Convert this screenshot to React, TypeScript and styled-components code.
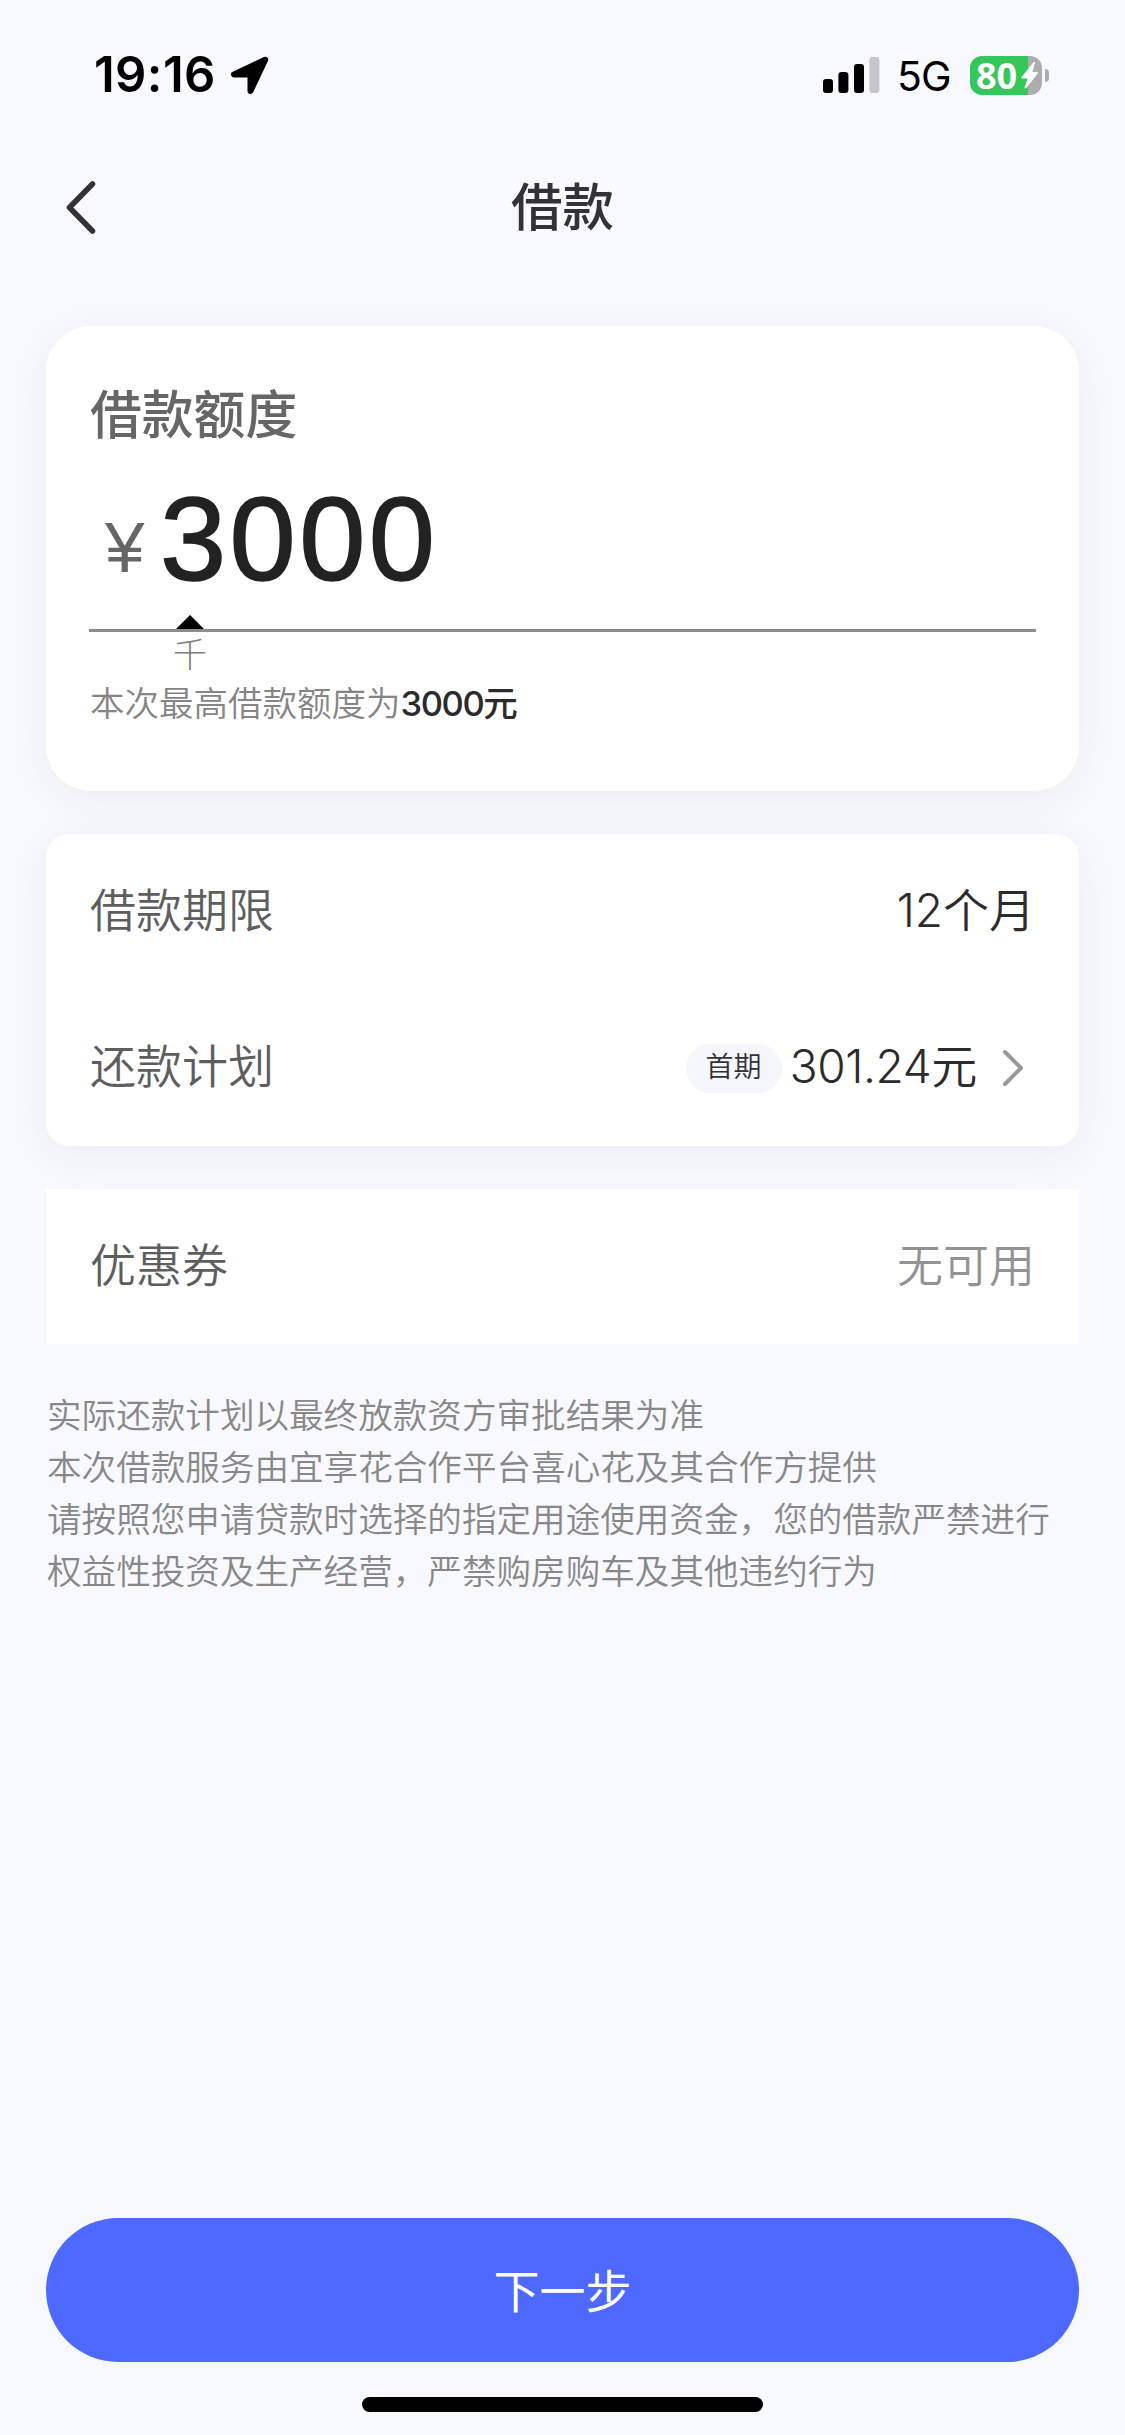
import React from 'react';
import styled, { createGlobalStyle } from 'styled-components';

const GlobalStyle = createGlobalStyle`
  * { box-sizing: border-box; }
  html, body { margin: 0; background: #f8f9fe; }
  body {
    font-family: Inter, "Noto Sans CJK SC", sans-serif;
    color: #333;
    -webkit-font-smoothing: antialiased;
  }
`;

const Screen = styled.div`
  width: 1125px;
  height: 2435px;
  display: flex;
  flex-direction: column;
  overflow: hidden;
  background: #f8f9fe;
`;

const StatusBar = styled.div`
  height: 141px;
  padding: 9px 76px 0 94px;
  display: flex;
  align-items: center;
  justify-content: space-between;
  color: #000;
`;

const StatusGroup = styled.div`
  display: flex;
  align-items: center;
`;

const Time = styled.span`
  font-size: 49px;
  font-weight: 600;
  line-height: 60px;
  letter-spacing: 0.4px;
  margin-right: 14px;
`;

const Network = styled.span`
  width: 57px;
  margin: 2px 16px 0 17px;
  font-size: 41px;
  line-height: 50px;
  letter-spacing: -1px;
`;

const Battery = styled.div`
  display: flex;
  align-items: center;
  gap: 3px;
`;

const BatteryBody = styled.div`
  width: 72px;
  height: 39px;
  padding-left: 6px;
  display: flex;
  align-items: center;
  border-radius: 12px;
  background: linear-gradient(to right, #34c759 58px, #adadb1 58px);
`;

const BatteryLevel = styled.span`
  width: 45px;
  font-family: "Open Sans", sans-serif;
  font-size: 36px;
  font-weight: 700;
  line-height: 39px;
  color: #fff;
`;

const BatteryTip = styled.div`
  width: 4px;
  height: 13px;
  border-radius: 0 5px 5px 0;
  background: #adadb1;
`;

const NavBar = styled.header`
  height: 132px;
  padding: 0 64px;
  display: grid;
  grid-template-columns: 34px 1fr 34px;
  align-items: center;
`;

const NavTitle = styled.h1`
  margin: 0;
  text-align: center;
  font-size: 51.5px;
  font-weight: 500;
  line-height: 76px;
`;

const Content = styled.main`
  flex: 1;
  padding: 53px 46px 0;
  display: flex;
  flex-direction: column;
`;

const Card = styled.section<{ $radius: number; $flat?: boolean }>`
  margin-bottom: 43px;
  background: #fff;
  border-radius: ${(p) => p.$radius}px;
  box-shadow: ${(p) => (p.$flat ? 'none' : '0 9px 45px rgba(40, 45, 80, 0.06)')};
`;

const AmountCard = styled(Card)`
  height: 465px;
  padding: 51px 43px 0;
`;

const AmountTitle = styled.h2`
  margin: 0;
  padding-left: 1px;
  font-size: 51.8px;
  font-weight: 500;
  line-height: 76px;
  color: #666;
`;

const AmountField = styled.div`
  height: 179px;
  display: flex;
  align-items: flex-end;
  padding: 0 0 25px 16px;
  border-bottom: 3px solid #8c8c8c;
  font-family: "Liberation Sans", Arial, sans-serif;
`;

const Currency = styled.span`
  width: 55px;
  margin-bottom: -4px;
  font-size: 71px;
  line-height: 120px;
  color: #666;
`;

const Amount = styled.span`
  font-size: 119px;
  line-height: 130px;
  letter-spacing: 3.4px;
  color: #222;
  -webkit-text-stroke: 1.6px #222;
`;

const UnitMark = styled.div`
  width: 36px;
  height: 46px;
  margin: -17px 0 0 83px;
  display: flex;
  flex-direction: column;
  align-items: center;
  font-size: 34px;
  font-weight: 300;
  line-height: 46px;
  color: #808080;
`;

const Pointer = styled.i`
  flex: none;
  width: 0;
  height: 0;
  margin-bottom: 3px;
  border: 14px solid transparent;
  border-top-width: 0;
  border-bottom-color: #000;
`;

const Hint = styled.p`
  margin: 18px 0 0 1px;
  font-size: 34.5px;
  font-weight: 350;
  line-height: 50px;
  color: #858585;
`;

const HintStrong = styled.b`
  font-weight: 500;
  letter-spacing: -1.4px;
  color: #2b2b2b;
`;

const Row = styled.div<{ $height?: number }>`
  height: ${(p) => p.$height ?? 156}px;
  padding: 0 44px;
  display: flex;
  align-items: center;
  font-size: 46px;
  line-height: 68px;
`;

const Label = styled.span`
  flex: 1;
  padding-bottom: 4px;
  font-weight: 350;
  color: #5e5e5e;
`;

const Value = styled.span<{ $muted?: boolean; $tight?: boolean }>`
  padding-bottom: 4px;
  font-weight: 350;
  letter-spacing: ${(p) => (p.$tight ? '-0.35px' : 'normal')};
  color: ${(p) => (p.$muted ? '#939393' : '#2b2b2b')};
`;

const Badge = styled.span`
  width: 96px;
  height: 49px;
  margin-right: 8px;
  border-radius: 25px;
  background: #f6f7fd;
  text-align: center;
  font-size: 28px;
  font-weight: 350;
  line-height: 47px;
`;

const Notice = styled.div`
  margin: 2px 0 0 1px;
  font-size: 34.6px;
  font-weight: 350;
  line-height: 52px;
  color: #888;
`;

const NoticeLine = styled.p`
  margin: 0;
  white-space: nowrap;
`;

const Footer = styled.footer`
  padding: 0 46px 23px;
  display: flex;
  flex-direction: column;
  align-items: center;
  gap: 35px;
`;

const NextButton = styled.button`
  width: 100%;
  height: 144px;
  padding: 0 0 4px;
  border: 0;
  border-radius: 72px;
  background: #4d69ff;
  color: #fff;
  font: inherit;
  font-size: 46px;
`;

const HomeIndicator = styled.div`
  width: 401px;
  height: 15px;
  border-radius: 8px;
  background: #000;
`;

const notices = [
  '实际还款计划以最终放款资方审批结果为准',
  '本次借款服务由宜享花合作平台喜心花及其合作方提供',
  '请按照您申请贷款时选择的指定用途使用资金，您的借款严禁进行',
  '权益性投资及生产经营，严禁购房购车及其他违约行为',
];

const LocationIcon = () => (
  <svg width="39" height="39" viewBox="0 0 39 39">
    <path
      d="M35.2 3.8 4 18.4H20.5V35Z"
      fill="#000"
      stroke="#000"
      strokeWidth="6"
      strokeLinejoin="round"
    />
  </svg>
);

const SignalIcon = () => (
  <svg width="57" height="36" viewBox="0 0 57 36">
    <rect x="0" y="22" width="10" height="14" rx="3" />
    <rect x="15.4" y="15" width="10" height="21" rx="3" />
    <rect x="31" y="7" width="10" height="29" rx="3" />
    <rect x="46.4" y="0" width="10" height="36" rx="3" fill="#c6c6ca" />
  </svg>
);

const BoltIcon = () => (
  <svg width="17" height="28" viewBox="0 0 17 28">
    <path
      d="M13 2 1.5 16.5H8L4.5 26.5 16 12H10Z"
      fill="#fff"
      stroke="#fff"
      strokeWidth="2"
      strokeLinejoin="round"
    />
  </svg>
);

const BackIcon = () => (
  <svg width="34" height="56" viewBox="0 0 34 56">
    <path d="M28.5 5 5.5 28.5 28.5 52" fill="none" stroke="#333" strokeWidth="5.5" strokeLinecap="round" strokeLinejoin="round" />
  </svg>
);

const MoreIcon = styled.svg`
  margin: 0 10px 0 24px;
`;

export default function App() {
  return (
    <Screen>
      <GlobalStyle />
      <StatusBar>
        <StatusGroup>
          <Time>19:16</Time>
          <LocationIcon />
        </StatusGroup>
        <StatusGroup>
          <SignalIcon />
          <Network>5G</Network>
          <Battery>
            <BatteryBody>
              <BatteryLevel>80</BatteryLevel>
              <BoltIcon />
            </BatteryBody>
            <BatteryTip />
          </Battery>
        </StatusGroup>
      </StatusBar>

      <NavBar>
        <BackIcon />
        <NavTitle>借款</NavTitle>
      </NavBar>

      <Content>
        <AmountCard $radius={45}>
          <AmountTitle>借款额度</AmountTitle>
          <AmountField>
            <Currency>¥</Currency>
            <Amount>3000</Amount>
          </AmountField>
          <UnitMark>
            <Pointer />
            千
          </UnitMark>
          <Hint>
            本次最高借款额度为<HintStrong>3000元</HintStrong>
          </Hint>
        </AmountCard>

        <Card $radius={23}>
          <Row>
            <Label>借款期限</Label>
            <Value>12个月</Value>
          </Row>
          <Row>
            <Label>还款计划</Label>
            <Badge>首期</Badge>
            <Value $tight>301.24元</Value>
            <MoreIcon width="24" height="38" viewBox="0 0 24 38">
              <path d="M4 3 20 19 4 35" fill="none" stroke="#999" strokeWidth="4" strokeLinecap="round" strokeLinejoin="round" />
            </MoreIcon>
          </Row>
        </Card>

        <Card $radius={0} $flat>
          <Row $height={155}>
            <Label>优惠券</Label>
            <Value $muted>无可用</Value>
          </Row>
        </Card>

        <Notice>
          {notices.map((line) => (
            <NoticeLine key={line}>{line}</NoticeLine>
          ))}
        </Notice>
      </Content>

      <Footer>
        <NextButton>下一步</NextButton>
        <HomeIndicator />
      </Footer>
    </Screen>
  );
}
